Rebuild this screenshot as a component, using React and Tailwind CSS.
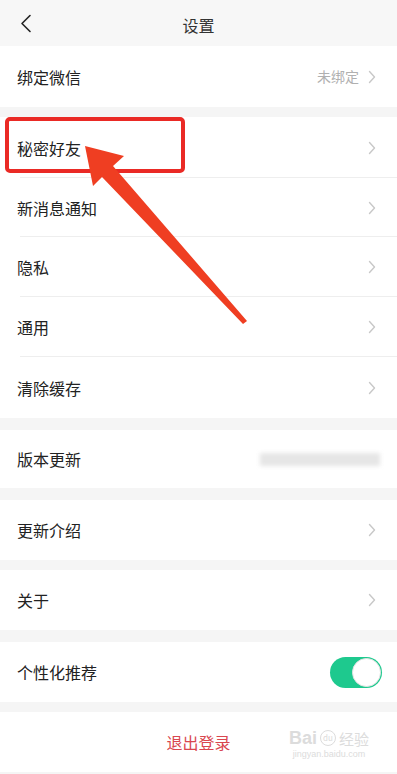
import React from "react";

const font = { fontFamily: '"Noto Sans CJK SC", "Noto Sans", sans-serif' };

function Chevron() {
  return (
    <svg width="8" height="14" viewBox="0 0 8 14" className="shrink-0">
      <path d="M1.5 1.5 L6.5 7 L1.5 12.5" fill="none" stroke="#c8c8c8" strokeWidth="1.4" strokeLinecap="round" strokeLinejoin="round" />
    </svg>
  );
}

function Row({ label, value, last, h = "h-[60px]", right }) {
  return (
    <div className={`relative flex items-center justify-between pl-[17px] pr-[21px] ${h}`}>
      <span className="text-[16px] text-[#222]">{label}</span>
      <div className="flex items-center gap-[9px]">
        {value && <span className="text-[14px] text-[#b0b0b0]">{value}</span>}
        {right || <Chevron />}
      </div>
      {!last && <div className="absolute bottom-0 left-[20px] right-0 h-px bg-[#eeeeee]" />}
    </div>
  );
}

function Toggle() {
  return (
    <div className="flex h-[31px] w-[52px] items-center justify-end rounded-full bg-[#1ec98e] p-[1px]">
      <div className="h-[29px] w-[29px] rounded-full border border-[#e3e3e3] bg-white" />
    </div>
  );
}

export default function App() {
  return (
    <div className="relative h-[774px] w-[397px] overflow-hidden bg-[#f5f5f5]" style={font}>
      {/* header */}
      <div className="relative flex h-[46px] items-center justify-center bg-[#f7f7f7] pt-[3px]">
        <svg width="12" height="20" viewBox="0 0 12 20" className="absolute left-[20px] top-[14px]">
          <path d="M10 1.5 L2 9.5 L10 17.5" fill="none" stroke="#222" strokeWidth="1.6" strokeLinecap="round" strokeLinejoin="round" />
        </svg>
        <span className="text-[16px] text-[#333]">设置</span>
      </div>

      <div className="bg-white">
        <Row label="绑定微信" value="未绑定" last h="h-[61px]" />
      </div>

      <div className="mt-[10px] bg-white">
        <Row label="秘密好友" h="h-[61px]" />
        <Row label="新消息通知" h="h-[59px]" />
        <Row label="隐私" />
        <Row label="通用" />
        <Row label="清除缓存" last h="h-[61px]" />
      </div>

      <div className="mt-[12px] bg-white">
        <Row
          label="版本更新"
          last
          h="h-[58px]"
          right={<div className="mr-[-4px] h-[13px] w-[120px] bg-[#e6e6e6] blur-[2px]" />}
        />
      </div>

      <div className="mt-[12px] bg-white">
        <Row label="更新介绍" last />
      </div>

      <div className="mt-[10px] bg-white">
        <Row label="关于" last />
      </div>

      <div className="mt-[12px] bg-white">
        <div className="flex h-[60px] items-center justify-between pl-[17px] pr-[15px]">
          <span className="text-[16px] text-[#222]">个性化推荐</span>
          <Toggle />
        </div>
      </div>

      <div className="relative mt-[10px] flex h-[60px] items-center justify-center bg-white">
        <span className="text-[16px] text-[#d9474f]">退出登录</span>
        <div className="absolute right-[28px] top-[17px] flex flex-col items-center leading-none text-[#dcdcdc]">
          <div className="flex items-center gap-[3px]">
            <span className="text-[18px] font-bold" style={{ fontFamily: '"Liberation Sans", sans-serif' }}>Bai</span>
            <span className="flex h-[16px] w-[16px] items-center justify-center rounded-full border border-[#dcdcdc] text-[8px]">du</span>
            <span className="text-[15px]">经验</span>
          </div>
          <span className="mt-[3px] text-[9px]" style={{ fontFamily: '"Liberation Sans", sans-serif' }}>jingyan.baidu.com</span>
        </div>
      </div>

      {/* annotation overlay */}
      <div className="pointer-events-none absolute left-[5px] top-[117px] h-[56px] w-[180px] rounded-[5px] border-[4px] border-[#ea2a25]" />
      <svg className="pointer-events-none absolute left-0 top-0" width="397" height="774" viewBox="0 0 397 774">
        <polygon points="85,146 124,156 113,166 247,321 243,324 102,177 93,186" fill="#ef3e22" />
      </svg>
    </div>
  );
}
